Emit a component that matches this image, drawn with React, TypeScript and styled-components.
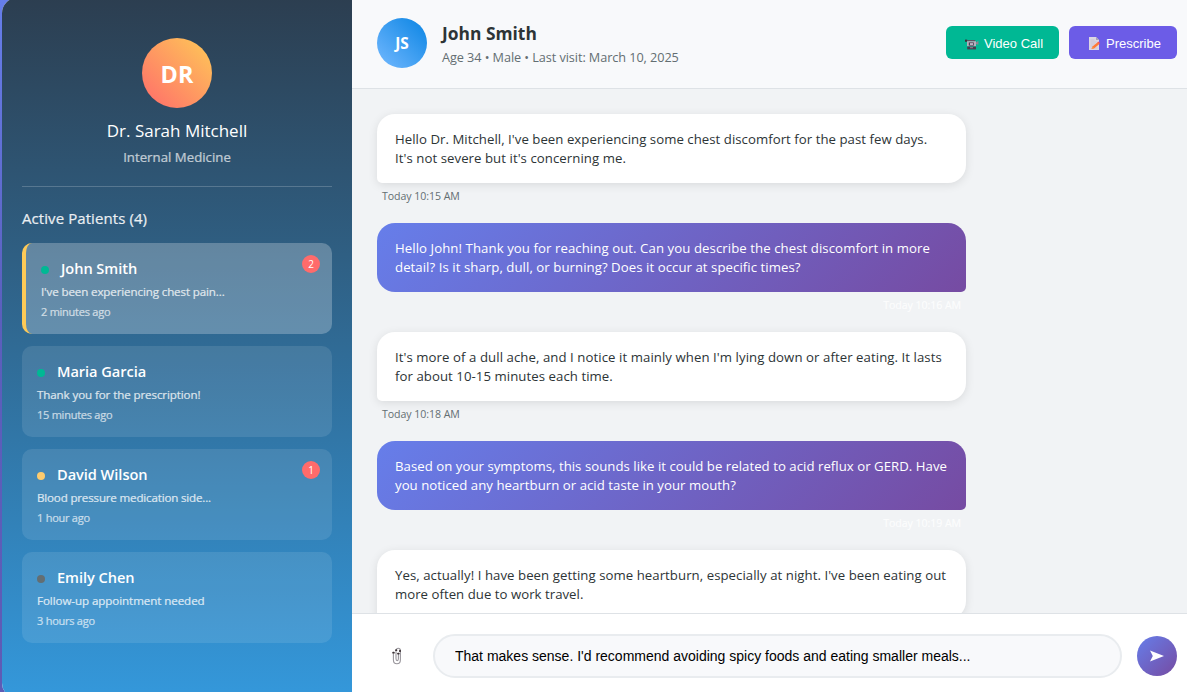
import React from "react";
import styled, { createGlobalStyle, css } from "styled-components";

const GlobalStyle = createGlobalStyle`
  * { box-sizing: border-box; margin: 0; padding: 0; }
  body {
    height: 692px;
    overflow: hidden;
    font-family: "Open Sans", "Noto Sans", sans-serif;
  }
`;

const Page = styled.div`
  height: 692px;
  overflow: hidden;
  background: linear-gradient(170deg, #667eea 0%, #5b5fbd 35%, #6159b0 100%);
`;

const Container = styled.div`
  display: flex;
  width: 1200px;
  height: 700px;
  margin: -2px 0 0 2px;
  border-radius: 15px;
  overflow: hidden;
  background: #fff;
`;

const Sidebar = styled.aside`
  width: 350px;
  flex: none;
  padding: 20px;
  color: #fff;
  background: linear-gradient(180deg, #2c3e50 0%, #3498db 100%);
`;

const Profile = styled.section`
  display: flex;
  flex-direction: column;
  align-items: center;
  height: 169px;
  padding-top: 20px;
  border-bottom: 1px solid rgba(255, 255, 255, 0.2);
`;

const Avatar = styled.div<{ $size: number; $from: string; $to: string; $font: number }>`
  display: flex;
  flex: none;
  align-items: center;
  justify-content: center;
  width: ${(p) => p.$size}px;
  height: ${(p) => p.$size}px;
  padding-top: 1px;
  border-radius: 50%;
  background: linear-gradient(45deg, ${(p) => p.$from}, ${(p) => p.$to});
  color: #fff;
  font-size: ${(p) => p.$font}px;
  font-weight: 700;
`;

const DoctorName = styled.h3`
  margin-top: 11px;
  font-size: 17px;
  line-height: 24px;
  font-weight: 400;
  white-space: nowrap;
`;

const Specialty = styled.p`
  margin-top: 5px;
  font-size: 13.2px;
  line-height: 19px;
  letter-spacing: 0.03px;
  opacity: 0.7;
  -webkit-text-stroke: 0.2px currentColor;
`;

const ListTitle = styled.h4`
  margin: 21px 0 14px;
  font-size: 15px;
  line-height: 21px;
  font-weight: 400;
  letter-spacing: 0.08px;
  opacity: 0.9;
  -webkit-text-stroke: 0.2px currentColor;
`;

const PatientList = styled.div`
  display: flex;
  flex-direction: column;
  gap: 12px;
`;

const PatientCard = styled.article<{ $active?: boolean }>`
  position: relative;
  height: 91px;
  padding: 15px;
  border-radius: 10px;
  background: rgba(255, 255, 255, 0.1);
  ${(p) =>
    p.$active &&
    css`
      background: rgba(255, 255, 255, 0.25);
      border-left: 4px solid #feca57;
    `}
`;

const PatientName = styled.div`
  display: flex;
  align-items: center;
  gap: 12px;
  height: 21px;
  font-size: 14.6px;
  line-height: 21px;
  font-weight: 600;
  letter-spacing: -0.05px;
`;

const Status = styled.span<{ $color: string }>`
  width: 8px;
  height: 8px;
  margin-top: 3px;
  border-radius: 50%;
  background: ${(p) => p.$color};
`;

const Preview = styled.p<{ $spacing: number }>`
  margin-top: 5px;
  font-size: 11.6px;
  line-height: 16px;
  letter-spacing: ${(p) => p.$spacing}px;
  opacity: 0.8;
  -webkit-text-stroke: 0.2px currentColor;
`;

const Ago = styled.p`
  margin-top: 4px;
  font-size: 11px;
  line-height: 15px;
  letter-spacing: -0.25px;
  opacity: 0.7;
  -webkit-text-stroke: 0.2px currentColor;
`;

const Badge = styled.span`
  position: absolute;
  top: 12px;
  right: 12px;
  width: 18px;
  height: 18px;
  border-radius: 50%;
  background: #ff6b6b;
  font-size: 10px;
  line-height: 19px;
  text-align: center;
`;

const Chat = styled.main`
  display: flex;
  flex: 1;
  flex-direction: column;
  min-width: 0;
`;

const Header = styled.header`
  display: flex;
  align-items: center;
  height: 91px;
  padding: 0 25px;
  background: #f8f9fb;
  border-bottom: 1px solid #dee2e6;
`;

const PatientInfo = styled.div`
  flex: 1;
  margin-left: 15px;
  padding-top: 2px;
`;

const HeaderName = styled.h2`
  color: #2d3436;
  font-size: 17.4px;
  line-height: 24px;
  font-weight: 700;
`;

const HeaderMeta = styled.p`
  margin-top: 3px;
  color: #636e72;
  font-size: 12.7px;
  line-height: 19px;
  letter-spacing: -0.07px;
`;

const Actions = styled.div`
  display: flex;
  gap: 10px;
  margin-top: -1px;
`;

const ActionButton = styled.button<{ $color: string; $width: number }>`
  display: flex;
  align-items: center;
  gap: 4px;
  width: ${(p) => p.$width}px;
  height: 33px;
  padding: 1px 0 0 18px;
  border: 0;
  border-radius: 6px;
  background: ${(p) => p.$color};
  color: #fff;
  font: 13px "Liberation Sans", Arial, sans-serif;
  white-space: nowrap;
`;

const Messages = styled.div`
  flex: 1;
  min-height: 0;
  overflow: hidden;
  padding: 25px;
  background: #f1f3f5;
`;

const Message = styled.div`
  width: 589px;
  height: 109px;
`;

const Bubble = styled.div<{ $own: boolean }>`
  height: 69px;
  padding: 16px 18px 14px;
  border-radius: ${(p) => (p.$own ? "18px 18px 5px 18px" : "18px 18px 18px 5px")};
  font-size: 13.2px;
  line-height: 19.4px;
  white-space: nowrap;
  ${(p) =>
    p.$own
      ? css`
          color: #fff;
          background: linear-gradient(135deg, #667eea 0%, #764ba2 100%);
        `
      : css`
          color: #2d3436;
          background: #fff;
          box-shadow: 0 2px 10px rgba(0, 0, 0, 0.1);
        `}
`;

const Line = styled.p<{ $spacing: number }>`
  letter-spacing: ${(p) => p.$spacing}px;
`;

const Time = styled.p<{ $own: boolean }>`
  padding: 5px 5px 0;
  font-size: 10.6px;
  line-height: 16px;
  letter-spacing: -0.06px;
  text-align: ${(p) => (p.$own ? "right" : "left")};
  color: ${(p) => (p.$own ? "rgba(255, 255, 255, 0.8)" : "#636e72")};
  ${(p) => p.$own && "-webkit-text-stroke: 0.2px currentColor;"}
`;

const Composer = styled.footer`
  display: flex;
  align-items: center;
  height: 85px;
  padding: 0 25px;
  background: #fff;
  border-top: 1px solid #dee2e6;
`;

const Attach = styled.button`
  display: flex;
  align-items: center;
  justify-content: center;
  width: 40px;
  height: 40px;
  margin-right: 16px;
  border: 0;
  background: none;
`;

const Input = styled.input`
  flex: 1;
  height: 44px;
  margin-right: 15px;
  padding: 0 20px;
  border: 2px solid #e9ecef;
  border-radius: 22px;
  background: #f8f9fb;
  color: #000;
  font: 14px "Liberation Sans", Arial, sans-serif;
  outline: none;
`;

const Send = styled.button`
  display: flex;
  align-items: center;
  justify-content: center;
  width: 40px;
  height: 40px;
  border: 0;
  border-radius: 50%;
  background: linear-gradient(135deg, #667eea 0%, #764ba2 100%);
`;

const CameraIcon = () => (
  <svg width="16" height="15" viewBox="0 0 16 15">
    <path d="M1 3.6h2.2v2.2H1z" fill="#39343d" />
    <path d="M3 4h8.2v1.4H3z" fill="#5b5663" />
    <path d="M3 5.2h9v5H3z" fill="#b4afbc" />
    <path d="M4.8 6.4h5v3.2h-5z" fill="#4c3b50" />
    <path d="M6 7.1h3v1.9H6z" fill="#b9b5c4" />
    <path d="M12 6.6l2.4-1.8v4L12 8z" fill="#8b8594" />
    <path d="M3.2 10.6h8.8v2.8H3.2z" fill="#4a3b4e" />
    <path d="M6 11.2h3v1H6z" fill="#8e8895" />
  </svg>
);

const MemoIcon = () => (
  <svg width="15" height="15" viewBox="0 0 15 15">
    <path d="M2 1h7l3 3v10H2z" fill="#dcd7e3" />
    <path d="M9 1l3 3H9z" fill="#aaa2b8" />
    <path d="M3.5 4h4M3.5 6h6M3.5 8h5M3.5 10h3M3.5 12h7" stroke="#c6c0d0" strokeWidth="0.7" />
    <path d="M4.6 13l.9-2.6 5.2-4.2 1.7 1.9-5.1 4.2z" fill="#ff7a35" />
    <path d="M10.4 6.2l1-.8 1.7 1.9-1 .9z" fill="#f8554f" />
    <path d="M4.6 13l.9-2.6 1.8 1.9z" fill="#ff9a4c" />
  </svg>
);

const ClipIcon = () => (
  <svg width="12" height="20" viewBox="0 0 12 20" fill="none" strokeLinecap="round">
    <path d="M2.4 7.5v6.2c0 5.4 7 5.4 7 0V4.6c0-3.2-4.4-3.2-4.4 0v8.2c0 2.4 2.4 2.4 2.4 0V7.6" stroke="#99969c" strokeWidth="1.1" />
    <path d="M2.1 6.7h.8M5 4.2h.4M9 4.6v.6M7 7.6h.8" stroke="#3a3034" strokeWidth="1.8" />
  </svg>
);

const SendIcon = () => (
  <svg width="16" height="14" viewBox="0 0 16 14">
    <path d="M1 1.4L15 7 1 12.6 3.8 7z" fill="#fff" />
  </svg>
);

const patients = [
  { name: "John Smith", preview: "I've been experiencing chest pain...", spacing: -0.13, ago: "2 minutes ago", color: "#00b894", unread: 2, active: true },
  { name: "Maria Garcia", preview: "Thank you for the prescription!", spacing: -0.11, ago: "15 minutes ago", color: "#00b894" },
  { name: "David Wilson", preview: "Blood pressure medication side...", spacing: -0.18, ago: "1 hour ago", color: "#fdcb6e", unread: 1 },
  { name: "Emily Chen", preview: "Follow-up appointment needed", spacing: -0.08, ago: "3 hours ago", color: "#636e72" },
];

type ChatMessage = { own: boolean; time?: string; lines: [string, number][] };

const messages: ChatMessage[] = [
  {
    own: false,
    time: "Today 10:15 AM",
    lines: [
      ["Hello Dr. Mitchell, I've been experiencing some chest discomfort for the past few days.", 0.045],
      ["It's not severe but it's concerning me.", 0.06],
    ],
  },
  {
    own: true,
    time: "Today 10:16 AM",
    lines: [
      ["Hello John! Thank you for reaching out. Can you describe the chest discomfort in more", 0.073],
      ["detail? Is it sharp, dull, or burning? Does it occur at specific times?", 0.058],
    ],
  },
  {
    own: false,
    time: "Today 10:18 AM",
    lines: [
      ["It's more of a dull ache, and I notice it mainly when I'm lying down or after eating. It lasts", 0.07],
      ["for about 10-15 minutes each time.", 0.06],
    ],
  },
  {
    own: true,
    time: "Today 10:19 AM",
    lines: [
      ["Based on your symptoms, this sounds like it could be related to acid reflux or GERD. Have", 0.035],
      ["you noticed any heartburn or acid taste in your mouth?", 0.04],
    ],
  },
  {
    own: false,
    lines: [
      ["Yes, actually! I have been getting some heartburn, especially at night. I've been eating out", 0.057],
      ["more often due to work travel.", 0.03],
    ],
  },
];

export default function App() {
  return (
    <Page>
      <GlobalStyle />
      <Container>
        <Sidebar>
          <Profile>
            <Avatar $size={70} $from="#ff6b6b" $to="#feca57" $font={23.4}>DR</Avatar>
            <DoctorName>Dr. Sarah Mitchell</DoctorName>
            <Specialty>Internal Medicine</Specialty>
          </Profile>
          <ListTitle>Active Patients (4)</ListTitle>
          <PatientList>
            {patients.map((p) => (
              <PatientCard key={p.name} $active={p.active}>
                <PatientName>
                  <Status $color={p.color} />
                  {p.name}
                </PatientName>
                <Preview $spacing={p.spacing}>{p.preview}</Preview>
                <Ago>{p.ago}</Ago>
                {p.unread && <Badge>{p.unread}</Badge>}
              </PatientCard>
            ))}
          </PatientList>
        </Sidebar>
        <Chat>
          <Header>
            <Avatar $size={50} $from="#74b9ff" $to="#0984e3" $font={15.4}>JS</Avatar>
            <PatientInfo>
              <HeaderName>John Smith</HeaderName>
              <HeaderMeta>Age 34 • Male • Last visit: March 10, 2025</HeaderMeta>
            </PatientInfo>
            <Actions>
              <ActionButton $color="#00b894" $width={113}>
                <CameraIcon />
                Video Call
              </ActionButton>
              <ActionButton $color="#6c5ce7" $width={108}>
                <MemoIcon />
                Prescribe
              </ActionButton>
            </Actions>
          </Header>
          <Messages>
            {messages.map((m) => (
              <Message key={m.lines[0][0]}>
                <Bubble $own={m.own}>
                  {m.lines.map(([text, spacing]) => (
                    <Line key={text} $spacing={spacing}>{text}</Line>
                  ))}
                </Bubble>
                {m.time && <Time $own={m.own}>{m.time}</Time>}
              </Message>
            ))}
          </Messages>
          <Composer>
            <Attach aria-label="Attach file">
              <ClipIcon />
            </Attach>
            <Input defaultValue="That makes sense. I'd recommend avoiding spicy foods and eating smaller meals..." />
            <Send aria-label="Send">
              <SendIcon />
            </Send>
          </Composer>
        </Chat>
      </Container>
    </Page>
  );
}
